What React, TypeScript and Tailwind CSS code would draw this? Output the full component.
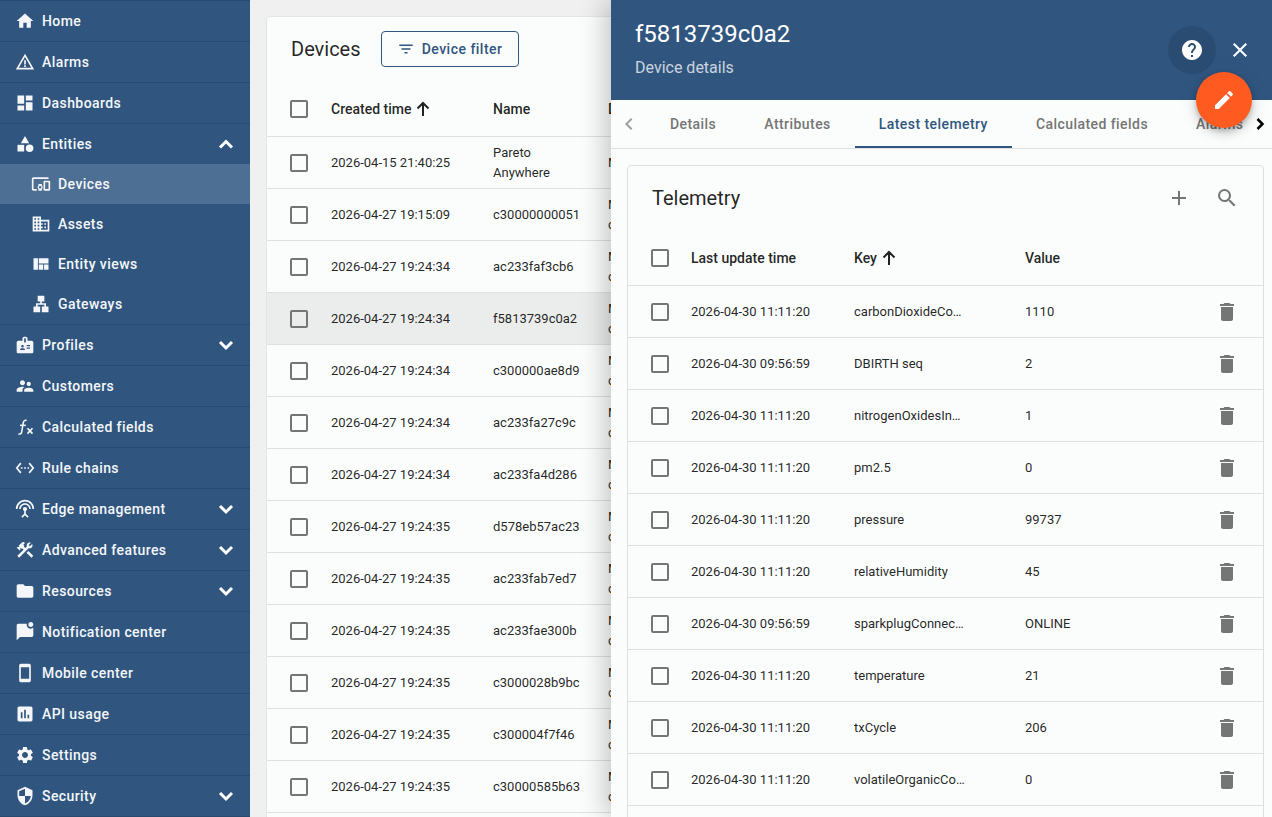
import React from "react";
import {
  MdHome, MdWarningAmber, MdDashboard, MdDevicesOther, MdDomain, MdViewQuilt, MdLan, MdBadge, MdSupervisorAccount,
  MdSettingsEthernet, MdSettingsInputAntenna, MdConstruction, MdFolder, MdMarkChatUnread, MdSmartphone,
  MdAssessment, MdSettings, MdSecurity, MdFilterList, MdHelp,
  MdClose, MdEdit, MdAdd, MdSearch, MdDelete, MdChevronLeft,
} from "react-icons/md";

const Shapes = ({ className }: { className?: string }) => (
  <svg viewBox="0 0 24 24" className={className} fill="currentColor">
    <path d="M12 2.500 17 11H7z" />
    <rect x="3" y="13" width="8" height="8" />
    <circle cx="17.500" cy="17" r="4.500" />
  </svg>
);

const Fx = ({ className }: { className?: string }) => (
  <svg viewBox="0 0 24 24" className={className} fill="none" stroke="currentColor" strokeWidth="1.800">
    <path d="M14 4.200c-2.200-.8-3.600.2-4 2.400L8 18c-.4 2.200-1.800 3-4 2.300" />
    <path d="M6 10h7" />
    <path d="M15 13.500 21 20M21 13.500 15 20" strokeWidth="2" />
  </svg>
);

const Chevron = ({ d, className }: { d: string; className?: string }) => (
  <svg viewBox="0 0 24 24" className={className} fill="none" stroke="currentColor" strokeWidth="3">
    <path d={d} />
  </svg>
);

const SortArrow = () => (
  <svg viewBox="0 0 18 18" className="ml-[3px] h-[18px] w-[18px]" fill="none" stroke="currentColor" strokeWidth="2">
    <path d="M9 16V3.500M3.500 8.500 9 3l5.500 5.500" />
  </svg>
);

type NavItem = { label: string; icon: React.ComponentType<{ className?: string }>; chevron?: "up" | "down" };
const topNav: NavItem[] = [
  { label: "Home", icon: MdHome },
  { label: "Alarms", icon: MdWarningAmber },
  { label: "Dashboards", icon: MdDashboard },
  { label: "Entities", icon: Shapes, chevron: "up" },
];
const subNav: NavItem[] = [
  { label: "Devices", icon: MdDevicesOther },
  { label: "Assets", icon: MdDomain },
  { label: "Entity views", icon: MdViewQuilt },
  { label: "Gateways", icon: MdLan },
];
const bottomNav: NavItem[] = [
  { label: "Profiles", icon: MdBadge, chevron: "down" },
  { label: "Customers", icon: MdSupervisorAccount },
  { label: "Calculated fields", icon: Fx },
  { label: "Rule chains", icon: MdSettingsEthernet },
  { label: "Edge management", icon: MdSettingsInputAntenna, chevron: "down" },
  { label: "Advanced features", icon: MdConstruction, chevron: "down" },
  { label: "Resources", icon: MdFolder, chevron: "down" },
  { label: "Notification center", icon: MdMarkChatUnread },
  { label: "Mobile center", icon: MdSmartphone },
  { label: "API usage", icon: MdAssessment },
  { label: "Settings", icon: MdSettings },
  { label: "Security", icon: MdSecurity, chevron: "down" },
];

function NavRow({ item, last }: { item: NavItem; last?: boolean }) {
  const Icon = item.icon;
  return (
    <div className={`flex shrink-0 items-center pl-[15px] pr-[12px] text-[14px] font-medium text-[#f4f6f9] ${last ? "h-[40px]" : "h-[41px] border-b border-[#294a6f]"}`}>
      <Icon className="h-[20px] w-[20px] shrink-0" />
      <span className="ml-[7px] flex-1 tracking-[0.42px]">{item.label}</span>
      {item.chevron === "up" && <Chevron d="M6 15.500l6-6 6 6" className="h-[24px] w-[24px] text-white" />}
      {item.chevron === "down" && <Chevron d="M6 9l6 6 6-6" className="h-[24px] w-[24px] text-white" />}
    </div>
  );
}

function SubRow({ item, active }: { item: NavItem; active?: boolean }) {
  const Icon = item.icon;
  return (
    <div className={`flex h-[40px] items-center pl-[31px] text-[14px] font-medium text-[#f4f6f9] ${active ? "bg-[#4e6f94]" : ""}`}>
      <Icon className="h-[20px] w-[20px] shrink-0" />
      <span className="ml-[7px] tracking-[0.42px]">{item.label}</span>
    </div>
  );
}

function Check() {
  return <div className="h-[18px] w-[18px] shrink-0 rounded-[2px] border-2 border-[#757575]" />;
}

const devices = [
  ["2026-04-15 21:40:25", "Pareto Anywhere"],
  ["2026-04-27 19:15:09", "c30000000051"],
  ["2026-04-27 19:24:34", "ac233faf3cb6"],
  ["2026-04-27 19:24:34", "f5813739c0a2"],
  ["2026-04-27 19:24:34", "c300000ae8d9"],
  ["2026-04-27 19:24:34", "ac233fa27c9c"],
  ["2026-04-27 19:24:34", "ac233fa4d286"],
  ["2026-04-27 19:24:35", "d578eb57ac23"],
  ["2026-04-27 19:24:35", "ac233fab7ed7"],
  ["2026-04-27 19:24:35", "ac233fae300b"],
  ["2026-04-27 19:24:35", "c3000028b9bc"],
  ["2026-04-27 19:24:35", "c300004f7f46"],
  ["2026-04-27 19:24:35", "c30000585b63"],
];

const telemetry = [
  ["2026-04-30 11:11:20", "carbonDioxideCo…", "1110"],
  ["2026-04-30 09:56:59", "DBIRTH seq", "2"],
  ["2026-04-30 11:11:20", "nitrogenOxidesIn…", "1"],
  ["2026-04-30 11:11:20", "pm2.5", "0"],
  ["2026-04-30 11:11:20", "pressure", "99737"],
  ["2026-04-30 11:11:20", "relativeHumidity", "45"],
  ["2026-04-30 09:56:59", "sparkplugConnec…", "ONLINE"],
  ["2026-04-30 11:11:20", "temperature", "21"],
  ["2026-04-30 11:11:20", "txCycle", "206"],
  ["2026-04-30 11:11:20", "volatileOrganicCo…", "0"],
];

const tabClass = "flex shrink-0 items-center border-y-2 border-t-transparent px-[24px] tracking-[0.44px]";

export default function App() {
  return (
    <div className="relative flex h-[817px] w-[1272px] overflow-hidden bg-[#eff0ef] text-[rgba(0,0,0,0.87)] [font-family:Roboto,sans-serif]">
      <nav className="flex h-full w-[250px] shrink-0 flex-col overflow-hidden bg-[#305680]">
        <div className="h-px shrink-0 bg-[#294a6f]" />
        {topNav.map((n, i) => <NavRow key={n.label} item={n} last={i === 3} />)}
        {subNav.map((n, i) => <SubRow key={n.label} item={n} active={i === 0} />)}
        <div className="h-px shrink-0 bg-[#294a6f]" />
        {bottomNav.map((n) => <NavRow key={n.label} item={n} />)}
      </nav>

      <main className="min-w-0 flex-1 pl-[16px] pt-[16px]">
        <section className="h-[830px] rounded-t-[4px] border-l border-t border-[#e4e5e4] bg-[#fbfdfc]">
          <header className="flex h-[64px] items-center pl-[24px]">
            <h2 className="text-[20px] font-normal leading-none">Devices</h2>
            <button className="ml-[20px] flex h-[36px] w-[138px] items-center justify-center rounded-[4px] border border-[#305680] text-[14px] font-medium tracking-[0.48px] text-[#305680]">
              <MdFilterList className="mr-[7px] h-[18px] w-[18px]" />
              Device filter
            </button>
          </header>
          <div className="flex h-[56px] items-center border-b border-[#dedfde] pt-[1px] text-[14px] font-medium">
            <div className="flex w-[64px] justify-center"><Check /></div>
            <div className="flex w-[162px] items-center">Created time <SortArrow /></div>
            <div className="w-[115px]">Name</div>
            <div>Device profile</div>
          </div>
          {devices.map(([t, n], i) => (
            <div key={n} className={`flex h-[52px] items-center border-b border-[#dedfde] text-[13px] leading-[20px] ${i === 3 ? "bg-[#ebecec]" : ""}`}>
              <div className="flex w-[64px] justify-center"><Check /></div>
              <div className="w-[162px]">{t}</div>
              <div className="w-[115px]">{i === 0 ? <>Pareto<br />Anywhere</> : n}</div>
              <div>Minew<br />{i === 0 ? "" : "co2"}</div>
            </div>
          ))}
        </section>
      </main>

      <aside className="absolute bottom-0 right-0 top-0 flex w-[661px] flex-col bg-[#fbfdfc] shadow-[-6px_0_24px_rgba(0,0,0,0.22)]">
        <header className="flex h-[100px] shrink-0 flex-col bg-[#305680] pl-[24px] text-white">
          <h1 className="mt-[18px] text-[24px] font-normal leading-[32px]">f5813739c0a2</h1>
          <p className="mt-[6px] text-[16px] leading-[24px] text-[rgba(255,255,255,0.75)]">Device details</p>
        </header>

        <div className="absolute right-[56px] top-[26px] flex h-[48px] w-[48px] items-center justify-center rounded-full bg-[#2a4c72] text-white">
          <MdHelp className="h-[24px] w-[24px]" />
        </div>
        <div className="absolute right-[20px] top-[38px] text-white"><MdClose className="h-[24px] w-[24px]" /></div>
        <div className="absolute right-[20px] top-[72px] z-10 flex h-[56px] w-[56px] items-center justify-center rounded-full bg-[#ff5a1f] text-white shadow-[0_3px_5px_-1px_rgba(0,0,0,0.2),0_6px_10px_0_rgba(0,0,0,0.14),0_1px_18px_0_rgba(0,0,0,0.12)]">
          <MdEdit className="h-[24px] w-[24px]" />
        </div>

        <nav className="flex h-[49px] shrink-0 items-stretch overflow-hidden border-b border-[#dedfde] text-[14px] font-medium text-[#757575]">
          <div className="flex w-[35px] shrink-0 items-center justify-center text-[#9e9e9e]"><MdChevronLeft className="h-[24px] w-[24px]" /></div>
          <div className="flex flex-1 overflow-hidden">
            <span className={`${tabClass} border-b-transparent`}>Details</span>
            <span className={`${tabClass} border-b-transparent`}>Attributes</span>
            <span className={`${tabClass} border-b-[#305680] text-[#305680]`}>Latest telemetry</span>
            <span className={`${tabClass} border-b-transparent`}>Calculated fields</span>
            <span className={`${tabClass} border-b-transparent`}>Alarms</span>
          </div>
          <div className="flex w-[24px] shrink-0 items-center justify-center text-black"><Chevron d="M9 6l6 6-6 6" className="h-[20px] w-[20px]" /></div>
        </nav>

        <div className="flex-1 overflow-hidden pl-[16px] pr-[8px] pt-[16px]">
          <section className="h-[700px] rounded-t-[4px] border border-[#dedfde] bg-[#fbfdfc]">
            <header className="flex h-[64px] items-center pl-[24px] pr-[24px]">
              <h2 className="flex-1 text-[20px] font-normal">Telemetry</h2>
              <MdAdd className="mr-[24px] h-[24px] w-[24px] text-[#757575]" />
              <MdSearch className="h-[24px] w-[24px] text-[#757575]" />
            </header>
            <div className="flex h-[56px] items-center border-b border-[#dedfde] pt-[1px] text-[14px] font-medium">
              <div className="flex w-[63px] justify-center pl-[1px]"><Check /></div>
              <div className="w-[163px]">Last update time</div>
              <div className="flex w-[171px] items-center">Key <SortArrow /></div>
              <div>Value</div>
            </div>
            {telemetry.map(([t, k, v], i) => (
              <div key={i} className="flex h-[52px] items-center border-b border-[#dedfde] text-[13px]">
                <div className="flex w-[63px] justify-center pl-[1px]"><Check /></div>
                <div className="w-[163px]">{t}</div>
                <div className="w-[171px]">{k}</div>
                <div className="flex-1">{v}</div>
                <MdDelete className="mr-[24px] h-[24px] w-[24px] text-[#757575]" />
              </div>
            ))}
          </section>
        </div>
      </aside>
    </div>
  );
}
